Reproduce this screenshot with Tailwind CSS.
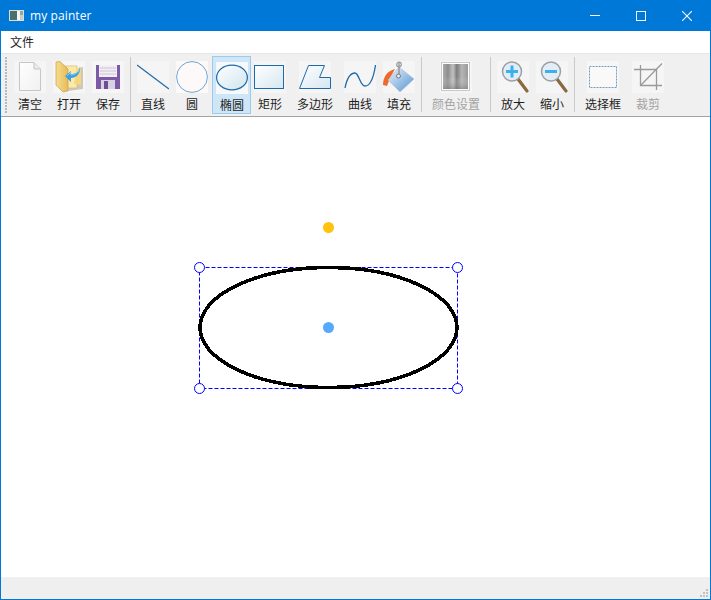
<!DOCTYPE html>
<html lang="zh">
<head>
<meta charset="utf-8">
<title>my painter</title>
<script src="https://cdn.jsdelivr.net/npm/@tailwindcss/browser@4"></script>
</head>
<body class="bg-white">
<div class="w-[711px] h-[600px] border border-[#0078d7] flex flex-col overflow-hidden font-['Noto_Sans_CJK_SC','Noto_Sans',sans-serif] text-[12px] text-[#1e1e1e]">

  <!-- title bar -->
  <div class="h-[30px] bg-[#0078d7] flex items-center text-white shrink-0">
    <svg class="ml-[8px] mb-[1px]" width="15" height="11" viewBox="0 0 15 11"><rect width="15" height="11" fill="#d8dedb"/><rect x="1" y="1" width="7" height="9" fill="#4d6f6a"/><rect x="8" y="1" width="3" height="9" fill="#f4f6f5"/><rect x="11" y="1" width="3" height="4" fill="#8fa8a2"/><rect x="11" y="5" width="3" height="5" fill="#c3d0cc"/></svg>
    <span class="ml-[6px] font-['Open_Sans',sans-serif] text-[12px] tracking-[0.1px] mb-[1px]">my painter</span>
    <div class="ml-auto flex h-full">
      <div class="w-[46px] flex items-center justify-center"><svg width="10" height="10" viewBox="0 0 10 10"><path d="M0 4.5H10" stroke="#fff" fill="none"/></svg></div>
      <div class="w-[46px] flex items-center justify-center"><svg width="10" height="10" viewBox="0 0 10 10"><rect x=".5" y=".5" width="9" height="9" stroke="#fff" fill="none"/></svg></div>
      <div class="w-[46px] flex items-center justify-center"><svg width="10" height="10" viewBox="0 0 10 10"><path d="M0 0L10 10M10 0L0 10" stroke="#fff" stroke-width="1.1" fill="none"/></svg></div>
    </div>
  </div>

  <!-- menu bar -->
  <div class="h-[22px] bg-white flex items-center pl-[9px] shrink-0"><span>文件</span></div>

  <!-- tool bar -->
  <div class="h-[64px] shrink-0 bg-[#f0f0f0] border-t border-t-[#e6e6e6] border-b border-b-[#a3a3a3] flex items-start">
    <svg class="ml-[4px] mt-[3px]" width="3" height="56" viewBox="0 0 3 56"><defs><pattern id="grip" width="3" height="3" patternUnits="userSpaceOnUse"><rect width="2" height="2" fill="#b9b9b9"/></pattern></defs><rect width="3" height="56" fill="url(#grip)"/></svg>

    <!-- 清空 -->
    <div class="ml-[6px] mt-[7px] w-8 flex flex-col items-center">
      <svg width="32" height="32" viewBox="0 0 32 32"><rect width="32" height="32" fill="#f5f5f5"/><defs><linearGradient id="doc" x1="0" y1="0" x2="1" y2="1"><stop offset="0" stop-color="#fff"/><stop offset="1" stop-color="#f0f0f0"/></linearGradient></defs><path d="M5.5 1.5H20L26.5 8V29.5H5.5Z" fill="url(#doc)" stroke="#c6c6c6"/><path d="M20 1.5V8H26.5" fill="#e9e9e9" stroke="#c6c6c6"/></svg>
      <span class="mt-[2px] leading-[18px] whitespace-nowrap">清空</span>
    </div>
    <!-- 打开 -->
    <div class="ml-[7px] mt-[7px] w-8 flex flex-col items-center">
      <svg width="32" height="32" viewBox="0 0 32 32"><rect width="32" height="32" fill="#f6f6f6"/><defs><linearGradient id="fold" x1="0" y1="0" x2="1" y2="0"><stop offset="0" stop-color="#f7dc8c"/><stop offset="1" stop-color="#e6bc5c"/></linearGradient></defs><path d="M20 8L30 6V28L15 30Z" fill="#c9c9c0"/><path d="M12 5H24V27H12Z" fill="#fbeaa8" stroke="#d7b45c" stroke-width=".6"/><path d="M3 1L7 0.5L15 8V30L10 31L3 24Z" fill="url(#fold)" stroke="#c79f45" stroke-width=".7"/><path d="M21 23L24 7H28V24Z" fill="#f6d67c"/><path d="M27 5C27 11 22 13 18 13V10L12 15L18 21V17C23 17 28 13 27 5Z" fill="#3b9ee0"/><path d="M26 9C25 12 21 14 18 14V11L14 15" fill="none" stroke="#a6dcf7" stroke-width=".8"/></svg>
      <span class="mt-[2px] leading-[18px] whitespace-nowrap">打开</span>
    </div>
    <!-- 保存 -->
    <div class="ml-[7px] mt-[7px] w-8 flex flex-col items-center">
      <svg width="32" height="32" viewBox="0 0 32 32"><rect width="32" height="32" fill="#f6f6f6"/><path d="M4 4H28V28H4Z" fill="#7d5aa6"/><rect x="7" y="4" width="18" height="12" fill="#f1eff3"/><path d="M8 7H24M8 10H24M8 13H24" stroke="#c9c2d6"/><rect x="9" y="19" width="14" height="9" fill="#d8d2e2"/><rect x="12" y="20" width="4" height="8" fill="#6d4d96"/></svg>
      <span class="mt-[2px] leading-[18px] whitespace-nowrap">保存</span>
    </div>

    <div class="ml-[6px] mt-[3px] w-px h-[55px] bg-[#c9c9c9]"></div>

    <!-- 直线 -->
    <div class="ml-[6px] mt-[7px] w-8 flex flex-col items-center">
      <svg width="32" height="32" viewBox="0 0 32 32"><rect width="32" height="32" fill="#f5f5f5"/><path d="M0 4L32 28" stroke="#1f6aa8" stroke-width="1.3" fill="none"/></svg>
      <span class="mt-[2px] leading-[18px] whitespace-nowrap">直线</span>
    </div>
    <!-- 圆 -->
    <div class="ml-[7px] mt-[7px] w-8 flex flex-col items-center">
      <svg width="32" height="32" viewBox="0 0 32 32"><rect width="32" height="32" fill="#fdf9f9"/><circle cx="16" cy="16" r="15.4" fill="#fdf9f9" stroke="#6ba6d2"/></svg>
      <span class="mt-[2px] leading-[18px] whitespace-nowrap">圆</span>
    </div>
    <!-- 椭圆 (checked) -->
    <div class="ml-[4px] mt-[2px] w-[39px] h-[58px] border border-[#9ccbee] bg-[#cde6f8] pl-[3px] pt-[5px] flex flex-col items-start">
      <div class="w-8 flex flex-col items-center">
        <svg width="32" height="32" viewBox="0 0 32 32"><rect width="32" height="32" fill="#f7f8f9"/><defs><linearGradient id="ell" x1="0" y1="0" x2="1" y2="1"><stop offset="0" stop-color="#fff"/><stop offset="1" stop-color="#cfe5ee"/></linearGradient></defs><ellipse cx="16" cy="15.5" rx="15.4" ry="12.4" fill="url(#ell)" stroke="#1f6aa8" stroke-width="1.2"/></svg>
        <span class="mt-[2px] leading-[18px] whitespace-nowrap">椭圆</span>
      </div>
    </div>
    <!-- 矩形 -->
    <div class="ml-[3px] mt-[7px] w-8 flex flex-col items-center">
      <svg width="32" height="32" viewBox="0 0 32 32"><rect width="32" height="32" fill="#f5f5f5"/><defs><linearGradient id="rc" x1="0" y1="0" x2="1" y2="1"><stop offset="0" stop-color="#fff"/><stop offset="1" stop-color="#d5e7f0"/></linearGradient></defs><rect x=".5" y="4.5" width="29" height="23" fill="url(#rc)" stroke="#1f6aa8"/></svg>
      <span class="mt-[2px] leading-[18px] whitespace-nowrap">矩形</span>
    </div>
    <!-- 多边形 -->
    <div class="ml-[13px] mt-[7px] w-8 flex flex-col items-center">
      <svg width="32" height="32" viewBox="0 0 32 32"><rect width="32" height="32" fill="#f5f5f5"/><defs><linearGradient id="pg" x1="0" y1="0" x2="1" y2="1"><stop offset="0" stop-color="#fff"/><stop offset="1" stop-color="#d5e7f0"/></linearGradient></defs><path d="M9.5 4.5H25.5L20.5 16.5H31.5V27.5H.5Z" fill="url(#pg)" stroke="#1f6aa8"/></svg>
      <span class="mt-[2px] leading-[18px] whitespace-nowrap">多边形</span>
    </div>
    <!-- 曲线 -->
    <div class="ml-[13px] mt-[7px] w-8 flex flex-col items-center">
      <svg width="32" height="32" viewBox="0 0 32 32"><rect width="32" height="32" fill="#f5f5f5"/><path d="M1 27C3 17 7 12 11 12C15 12 16 25 21 25C27 25 30 14 31.5 4" fill="none" stroke="#1f6aa8" stroke-width="1.3"/></svg>
      <span class="mt-[2px] leading-[18px] whitespace-nowrap">曲线</span>
    </div>
    <!-- 填充 -->
    <div class="ml-[7px] mt-[7px] w-8 flex flex-col items-center">
      <svg width="32" height="32" viewBox="0 0 32 32"><rect width="32" height="32" fill="#f5f5f5"/><defs><linearGradient id="bk" x1="0" y1="0" x2="1" y2="1"><stop offset="0" stop-color="#f0f3f7"/><stop offset="1" stop-color="#4f93d6"/></linearGradient></defs><path d="M0 24C0 16 4 10 12 8L7 17L4 25Z" fill="#ee6a2c"/><path d="M16 6L31 18L17 31L5 19Z" fill="url(#bk)" stroke="#b4c0cc" stroke-width=".6"/><path d="M16 1.5V14" stroke="#8a8a8a" stroke-width="1.2"/><circle cx="16" cy="3.5" r="2.3" fill="none" stroke="#9a9a9a" stroke-width="1.2"/><circle cx="15.5" cy="15" r="2" fill="#e8eef4" stroke="#7a7a7a"/></svg>
      <span class="mt-[2px] leading-[18px] whitespace-nowrap">填充</span>
    </div>

    <div class="ml-[6px] mt-[3px] w-px h-[55px] bg-[#c9c9c9]"></div>

    <!-- 颜色设置 -->
    <div class="ml-[18px] mt-[7px] w-8 flex flex-col items-center text-[#a3a3a3]">
      <svg width="32" height="32" viewBox="0 0 32 32"><rect width="32" height="32" fill="#f5f5f5"/><defs><linearGradient id="gr" x1="0" y1="0" x2="1" y2="0"><stop offset="0" stop-color="#aaa"/><stop offset=".2" stop-color="#8d8d8d"/><stop offset=".4" stop-color="#c2c2c2"/><stop offset=".55" stop-color="#7d7d7d"/><stop offset=".75" stop-color="#b5b5b5"/><stop offset="1" stop-color="#999"/></linearGradient><linearGradient id="gv" x1="0" y1="0" x2="0" y2="1"><stop offset=".5" stop-color="#fff" stop-opacity="0"/><stop offset="1" stop-color="#777" stop-opacity=".5"/></linearGradient></defs><rect x="1.5" y="1.5" width="28" height="28" fill="#fff" stroke="#c8c8c8"/><rect x="3" y="3" width="25" height="25" fill="url(#gr)"/><rect x="3" y="3" width="25" height="25" fill="url(#gv)"/></svg>
      <span class="mt-[2px] leading-[18px] whitespace-nowrap">颜色设置</span>
    </div>

    <div class="ml-[18px] mt-[3px] w-px h-[55px] bg-[#c9c9c9]"></div>

    <!-- 放大 -->
    <div class="ml-[6px] mt-[7px] w-8 flex flex-col items-center">
      <svg width="32" height="32" viewBox="0 0 32 32"><rect width="32" height="32" fill="#f5f5f5"/><path d="M21 18L30 30" stroke="#8b6a3e" stroke-width="3.2" stroke-linecap="round"/><circle cx="15" cy="10.5" r="9.5" fill="#e4edf6" stroke="#9aa0a6" stroke-width="1.5"/><path d="M9 10.5H21M15 4.5V16.5" stroke="#38b2ee" stroke-width="3"/></svg>
      <span class="mt-[2px] leading-[18px] whitespace-nowrap">放大</span>
    </div>
    <!-- 缩小 -->
    <div class="ml-[7px] mt-[7px] w-8 flex flex-col items-center">
      <svg width="32" height="32" viewBox="0 0 32 32"><rect width="32" height="32" fill="#f5f5f5"/><path d="M21 18L30 30" stroke="#8b6a3e" stroke-width="3.2" stroke-linecap="round"/><circle cx="15" cy="10.5" r="9.5" fill="#e4edf6" stroke="#9aa0a6" stroke-width="1.5"/><path d="M9 10.5H21" stroke="#38b2ee" stroke-width="3"/></svg>
      <span class="mt-[2px] leading-[18px] whitespace-nowrap">缩小</span>
    </div>

    <div class="ml-[6px] mt-[3px] w-px h-[55px] bg-[#c9c9c9]"></div>

    <!-- 选择框 -->
    <div class="ml-[12px] mt-[7px] w-8 flex flex-col items-center">
      <svg width="32" height="32" viewBox="0 0 32 32"><rect width="32" height="32" fill="#f6f6f6"/><rect x="2.5" y="5.5" width="27" height="21" fill="#f9f9f9" stroke="#6d9dc0" stroke-dasharray="2 1"/></svg>
      <span class="mt-[2px] leading-[18px] whitespace-nowrap">选择框</span>
    </div>
    <!-- 裁剪 -->
    <div class="ml-[13px] mt-[7px] w-8 flex flex-col items-center text-[#a3a3a3]">
      <svg width="32" height="32" viewBox="0 0 32 32"><rect width="32" height="32" fill="#f5f5f5"/><path d="M8.5 4V24.5H30M2 8.5H24.5V29" fill="none" stroke="#9a9a9a" stroke-width="1.3"/><path d="M8.5 24.5L30 2.5" stroke="#9a9a9a" stroke-width="1.3"/></svg>
      <span class="mt-[2px] leading-[18px] whitespace-nowrap">裁剪</span>
    </div>
  </div>

  <!-- canvas -->
  <div class="h-[460px] shrink-0 bg-white">
    <svg class="block" width="709" height="460" viewBox="1 117 709 460">
      <rect x="199.5" y="267.5" width="258" height="121" fill="none" stroke="#0000ff" stroke-dasharray="4 2"/>
      <ellipse cx="328.5" cy="327.5" rx="128.5" ry="60" fill="none" stroke="#000" stroke-width="3.6" shape-rendering="crispEdges"/>
      <circle cx="199.5" cy="267.5" r="5" fill="#fff" stroke="#0000ff"/>
      <circle cx="457.5" cy="267.5" r="5" fill="#fff" stroke="#0000ff"/>
      <circle cx="199.5" cy="388.5" r="5" fill="#fff" stroke="#0000ff"/>
      <circle cx="457.5" cy="388.5" r="5" fill="#fff" stroke="#0000ff"/>
      <circle cx="328.5" cy="227.5" r="5.5" fill="#ffc30b"/>
      <circle cx="328.5" cy="327.5" r="5.5" fill="#55aaff"/>
    </svg>
  </div>

  <!-- status bar -->
  <div class="h-[22px] shrink-0 bg-[#efefef] flex items-end justify-end pr-[1px] pb-[1px]">
    <svg width="10" height="10" viewBox="0 0 10 10" fill="#c2c2c2"><rect x="7" y="1" width="2" height="2"/><rect x="4" y="4" width="2" height="2"/><rect x="7" y="4" width="2" height="2"/><rect x="1" y="7" width="2" height="2"/><rect x="4" y="7" width="2" height="2"/><rect x="7" y="7" width="2" height="2"/></svg>
  </div>
</div>
</body>
</html>
